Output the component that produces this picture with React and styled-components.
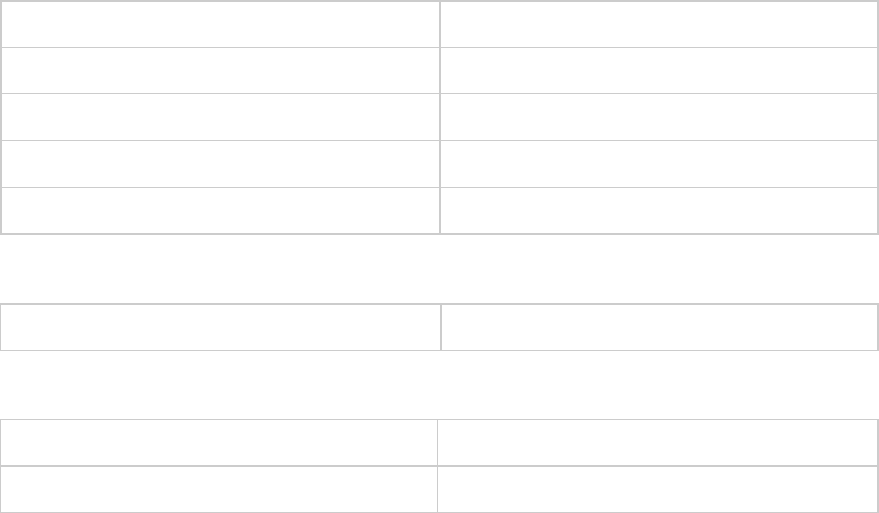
import React from 'react'
import styled, { createGlobalStyle } from 'styled-components'

const GlobalStyle = createGlobalStyle`
  html, body {
    margin: 0;
    padding: 0;
    background: #fff;
    font-family: "Liberation Sans", Arial, sans-serif;
  }
`

const line = '#cccccc'

const Page = styled.div`
  width: 879px;
  display: flex;
  flex-direction: column;
  gap: 68px;
`

const Table = styled.div`
  display: flex;
  flex-direction: column;
  border-style: solid;
  border-color: ${line};
  border-width: ${p => p.$edges.join('px ')}px;
`

const Row = styled.div`
  display: grid;
  grid-template-columns: ${p => p.$split}px 1fr;
  height: ${p => p.$h}px;
  border-top: ${p => p.$rule}px solid ${line};
`

const Cell = styled.div`
  border-right: ${p => p.$divider || 0}px solid ${line};
`

// edges: top right bottom left
const tables = [
  { edges: [2, 2, 2, 2], split: 439, divider: 2, rule: 1, rows: [45, 45, 46, 46, 45] },
  { edges: [2, 2, 1, 1], split: 441, divider: 2, rule: 1, rows: [45] },
  { edges: [1, 2, 1, 1], split: 437, divider: 1, rule: 2, rows: [45, 45] },
]

const App = () => {
  return (
    <>
      <GlobalStyle />
      <Page>
        {tables.map((t, ti) => (
          <Table key={ti} $edges={t.edges}>
            {t.rows.map((h, ri) => (
              <Row key={ri} $split={t.split} $h={h} $rule={ri === 0 ? 0 : t.rule}>
                <Cell $divider={t.divider} />
                <Cell />
              </Row>
            ))}
          </Table>
        ))}
      </Page>
    </>
  )
}

export default App
